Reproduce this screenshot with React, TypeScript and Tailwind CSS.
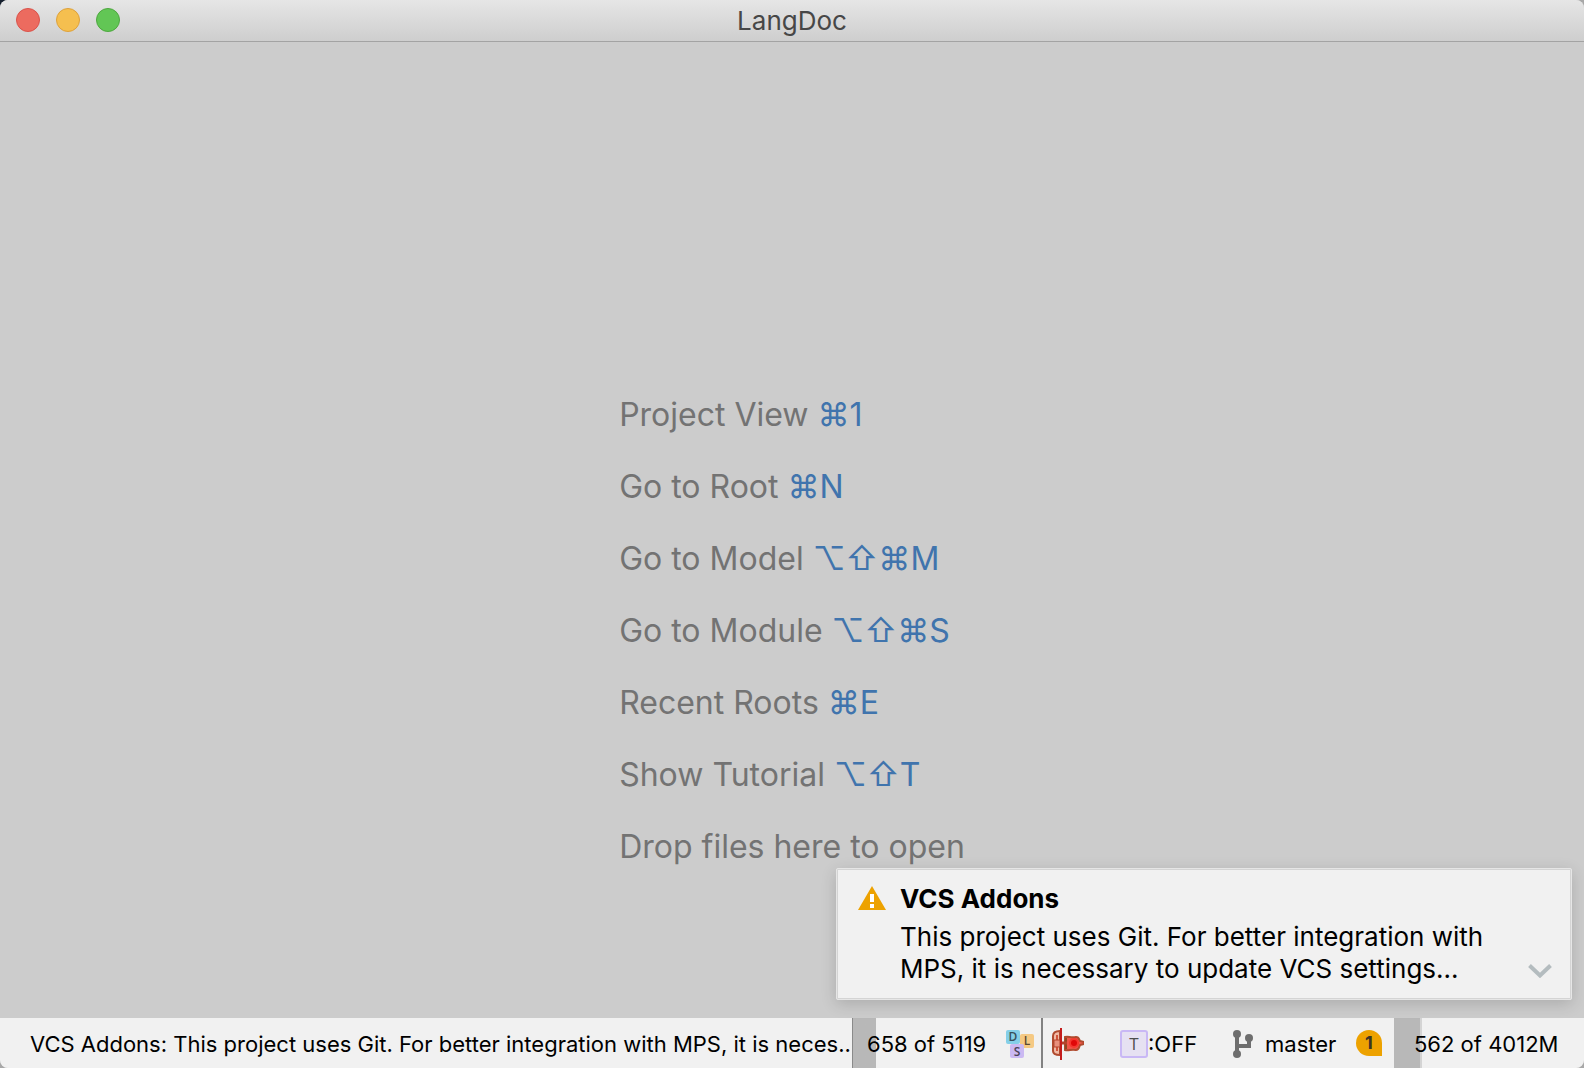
import React from "react";

interface Hint {
  label: string;
  keys?: string;
}

const hints: Hint[] = [
  { label: "Project View", keys: "⌘1" },
  { label: "Go to Root", keys: "⌘N" },
  { label: "Go to Model", keys: "⌥⇧⌘M" },
  { label: "Go to Module", keys: "⌥⇧⌘S" },
  { label: "Recent Roots", keys: "⌘E" },
  { label: "Show Tutorial", keys: "⌥⇧T" },
  { label: "Drop files here to open" },
];

const TitleBar: React.FC = () => (
  <header className="grid h-[42px] shrink-0 grid-cols-3 items-center border-b border-[#a3a3a3] bg-linear-to-b from-[#e6e6e6] to-[#cecece] px-4 pb-px">
    <div className="flex gap-4">
      <button
        type="button"
        aria-label="Close"
        className="size-6 rounded-full border border-[#d9534b] bg-[#ec6b5f]"
      />
      <button
        type="button"
        aria-label="Minimize"
        className="size-6 rounded-full border border-[#dda13c] bg-[#f5bf4f]"
      />
      <button
        type="button"
        aria-label="Zoom"
        className="size-6 rounded-full border border-[#4ea73f] bg-[#62c655]"
      />
    </div>
    <h1 className="pt-0.5 text-center text-[26px] leading-8 text-[#474747]">
      LangDoc
    </h1>
  </header>
);

const WarningIcon: React.FC = () => (
  <svg viewBox="0 0 28 24" className="mt-[3px] h-6 w-7 shrink-0">
    <path d="M14 0 28 24H0Z" fill="#eda200" />
    <path d="M12 8h4v8h-4zM12 18h4v4h-4z" fill="#fff" />
  </svg>
);

const Notification: React.FC = () => (
  <section className="absolute right-3 bottom-[18px] flex w-[736px] gap-[14px] rounded-xs border-2 border-[#d4d4d4] bg-[#f1f1f1] py-[13px] pr-[18px] pl-5 text-black shadow-[0_4px_16px_rgba(0,0,0,0.16)] outline outline-[#e6e6e6] -outline-offset-1">
    <WarningIcon />
    <div className="flex-1">
      <h2 className="text-[26px] leading-8 font-bold">VCS Addons</h2>
      <p className="mt-1.5 text-[26px] leading-8">
        This project uses Git. For better integration with
        <br />
        MPS, it is necessary to update VCS settings...
      </p>
    </div>
    <button type="button" aria-label="Expand" className="self-end pb-[7px]">
      <svg viewBox="0 0 24 14" className="h-[14px] w-6">
        <path
          d="M1.5 1.5 12 11.5 22.5 1.5"
          fill="none"
          stroke="#b4bcbf"
          strokeWidth="4"
        />
      </svg>
    </button>
  </section>
);

const DslIcon: React.FC = () => (
  <svg
    viewBox="0 0 28 28"
    className="size-7 overflow-visible"
    fontFamily="Open Sans, sans-serif"
    fontSize="12"
    fontWeight="600"
    textAnchor="middle"
  >
    <rect width="14" height="14" rx="2" fill="#84cfe8" />
    <rect x="14" y="4" width="14" height="14" rx="2" fill="#f5c983" />
    <rect x="4" y="14" width="14" height="14" rx="2" fill="#cbb9f2" />
    <text x="7" y="11" fill="#38505a">
      D
    </text>
    <text x="21" y="15" fill="#5a4a33">
      L
    </text>
    <text x="11" y="26" fill="#4a4358">
      S
    </text>
  </svg>
);

const LampIcon: React.FC = () => (
  <svg viewBox="0 0 32 32" className="size-8">
    <path
      d="M8 3C3 3 1 5 1 8v15c0 3 2 4 7 4Z"
      fill="#f0b9a4"
      stroke="#b04a2e"
      strokeWidth="2"
    />
    <path d="M5 7v5M5 18v5" stroke="#d2543a" strokeWidth="2" />
    <path d="M2 12h6v7H2z" fill="#e8907c" stroke="#b5442c" />
    <path
      d="M13 9c4-1 5 1 11 0 3 0 3 2 4 4l4 1v2l-4 1c-1 2-1 5-4 5-5-1-7 1-11 0Z"
      fill="#ee5648"
      stroke="#b04a2e"
      strokeWidth="2"
    />
    <path d="M14 10v11" stroke="#8c4a24" strokeWidth="2" />
    <path d="M9 15h6" stroke="#b5442c" strokeWidth="3" />
    <circle cx="22" cy="15" r="5" fill="#f5382f" />
    <circle cx="22" cy="15" r="3" fill="#e00808" />
    <path d="M9 0v32" stroke="#c41c1c" strokeWidth="2" />
  </svg>
);

const TypesIcon: React.FC = () => (
  <svg viewBox="0 0 28 28" className="size-7 shrink-0">
    <rect
      x="1"
      y="1"
      width="26"
      height="26"
      rx="2"
      fill="#e6e1f2"
      stroke="#c9b8f5"
      strokeWidth="2"
    />
    <text
      x="14"
      y="20"
      fontSize="17"
      fontFamily="Open Sans, sans-serif"
      fontWeight="500"
      textAnchor="middle"
      fill="#4d4d4d"
    >
      T
    </text>
  </svg>
);

const BranchIcon: React.FC = () => (
  <svg viewBox="0 0 20 28" className="h-7 w-5 shrink-0" fill="#6e6e6e">
    <circle cx="4" cy="4" r="4" />
    <circle cx="4" cy="24" r="4" />
    <circle cx="16" cy="8" r="4" />
    <path d="M2 4h4v10h8V8h4v10H6v6H2z" />
  </svg>
);

const StatusBar: React.FC = () => (
  <footer className="flex h-[50px] shrink-0 items-center bg-[#f1f1f1] text-[22px] leading-7 whitespace-nowrap text-black">
    <p className="min-w-0 flex-1 overflow-hidden pt-0.5 pl-[30px]">
      VCS Addons: This project uses Git. For better integration with MPS, it is
      neces..
    </p>
    <div className="flex h-full w-[150px] items-center border-l border-[#8a8a8a] bg-linear-to-r from-[#b8b8b8] from-[23px] to-[#f1f1f1] to-[23px] pt-0.5 pl-[14px]">
      658 of 5119
    </div>
    <button type="button" aria-label="Languages" className="mr-[7px] ml-1 pt-0.5">
      <DslIcon />
    </button>
    <span className="h-full w-0.5 bg-[#828282]" />
    <button type="button" aria-label="Power save" className="ml-[9px] pt-0.5">
      <LampIcon />
    </button>
    <button type="button" className="ml-9 flex w-[77px] items-center pt-0.5">
      <TypesIcon />
      :OFF
    </button>
    <button type="button" className="ml-9 flex w-[105px] items-center gap-3 pt-0.5">
      <BranchIcon />
      master
    </button>
    <button
      type="button"
      className="mr-3 ml-[18px] size-[26px] rounded-full rounded-br-none bg-[#eda200] text-lg leading-6 font-bold text-[#3b3325]"
    >
      1
    </button>
    <div className="flex h-full w-[190px] items-center">
      <span className="h-full w-[26px] bg-[#b8b8b8]" />
      <span className="h-full w-0.5 bg-[#d4d4d4]" />
      <span className="-ml-2 pt-0.5">562 of 4012M</span>
    </div>
  </footer>
);

const App: React.FC = () => {
  return (
    <div className="bg-linear-to-br from-[#16202e] from-10% to-[#a8a8a8] to-10%">
      <div className="flex h-screen flex-col overflow-hidden rounded-lg bg-[#cccccc] font-['Inter','Liberation_Sans',sans-serif]">
        <TitleBar />
        <main className="relative flex flex-1 justify-center pt-[337px]">
          <ul className="text-[32px] leading-[72px] text-[#737373]">
            {hints.map((hint) => (
              <li key={hint.label}>
                {hint.label}{" "}
                {hint.keys && (
                  <kbd className="font-[inherit] text-[#4074ad]">
                    {hint.keys}
                  </kbd>
                )}
              </li>
            ))}
          </ul>
          <Notification />
        </main>
        <StatusBar />
      </div>
    </div>
  );
};

export default App;
